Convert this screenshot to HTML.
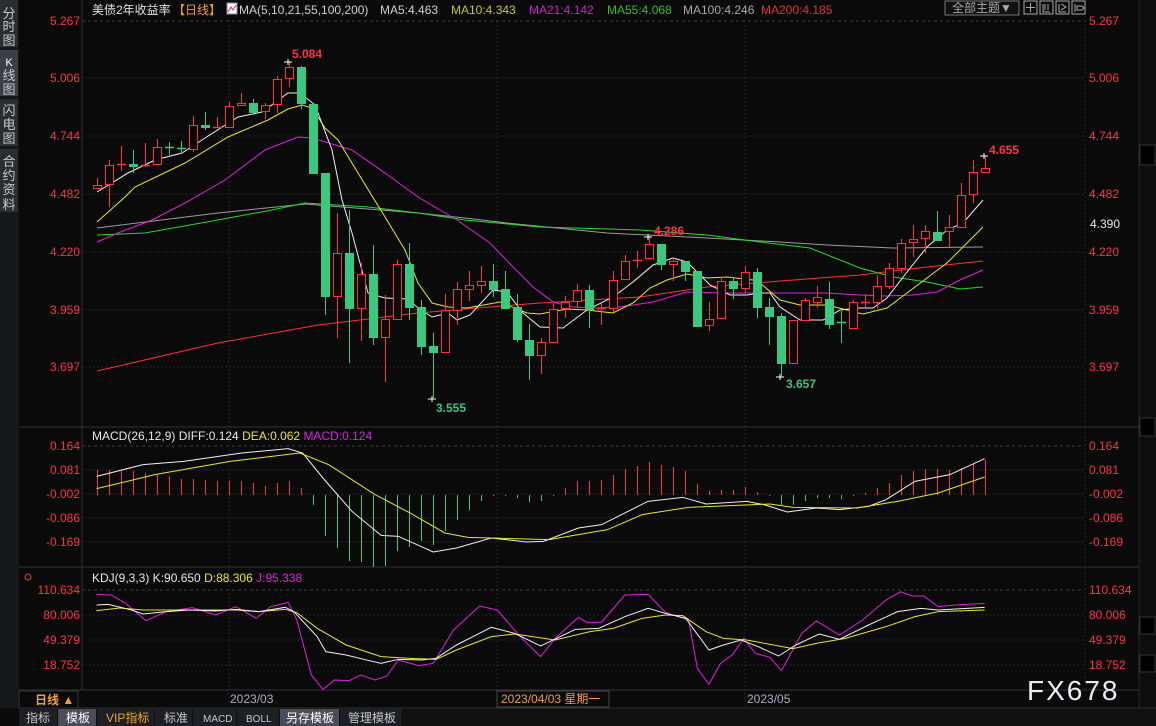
<!DOCTYPE html>
<html><head><meta charset="utf-8">
<style>
html,body{margin:0;padding:0;background:#0a0a0a;width:1156px;height:726px;overflow:hidden}
svg{display:block}
text{font-family:"Liberation Sans","Noto Sans CJK SC",sans-serif}
</style></head>
<body>
<svg id="s" width="1156" height="726" viewBox="0 0 1156 726" xmlns="http://www.w3.org/2000/svg">
<rect width="1156" height="726" fill="#0a0a0a"/>
<rect x="0" y="0" width="19" height="708" fill="#16171b"/>
<rect x="0" y="0" width="18" height="47" fill="#2b2d33"/>
<rect x="0" y="50" width="18" height="46" fill="#3c3f48"/>
<rect x="0" y="99" width="18" height="47" fill="#2b2d33"/>
<rect x="0" y="149" width="18" height="63" fill="#2b2d33"/>
<g fill="#c8c8c8" font-size="13" text-anchor="middle">
<text x="9" y="18">分</text><text x="9" y="31">时</text><text x="9" y="45">图</text>
<text x="9" y="66" font-size="11" fill="#fff">K</text><text x="9" y="80">线</text><text x="9" y="94">图</text>
<text x="9" y="115">闪</text><text x="9" y="129">电</text><text x="9" y="143">图</text>
<text x="9" y="166">合</text><text x="9" y="180">约</text><text x="9" y="194">资</text><text x="9" y="209">料</text>
</g>
<line x1="82" y1="0" x2="82" y2="690" stroke="#333" />
<line x1="1085" y1="0" x2="1085" y2="690" stroke="#333" stroke-dasharray="1,3"/>
<rect x="1139" y="0" width="17" height="708" fill="#0e0e0e"/>
<line x1="1139" y1="0" x2="1139" y2="708" stroke="#2a2a2a"/>
<rect x="1140" y="145" width="15" height="20" fill="#000" stroke="#333"/>
<rect x="1140" y="418" width="15" height="18" fill="#000" stroke="#333"/>
<rect x="1140" y="617" width="15" height="17" fill="#000" stroke="#333"/>
<rect x="1140" y="655" width="15" height="17" fill="#000" stroke="#333"/>
<line x1="19" y1="427" x2="1139" y2="427" stroke="#333"/>
<line x1="19" y1="567" x2="1139" y2="567" stroke="#333"/>
<line x1="19" y1="690" x2="1139" y2="690" stroke="#333"/>
<line x1="19" y1="708" x2="1156" y2="708" stroke="#333"/>
<g stroke="#3a3a3a" stroke-dasharray="1,3">
<line x1="82" y1="21" x2="1085" y2="21" stroke-dasharray="3,3"/>
<line x1="82" y1="78" x2="1085" y2="78"/><line x1="82" y1="136" x2="1085" y2="136"/>
<line x1="82" y1="194" x2="1085" y2="194"/><line x1="82" y1="252" x2="1085" y2="252"/>
<line x1="82" y1="310" x2="1085" y2="310"/><line x1="82" y1="367" x2="1085" y2="367"/>
<line x1="82" y1="446" x2="1085" y2="446" stroke-dasharray="3,3"/><line x1="82" y1="470" x2="1085" y2="470"/>
<line x1="82" y1="494" x2="1085" y2="494"/><line x1="82" y1="518" x2="1085" y2="518"/><line x1="82" y1="542" x2="1085" y2="542"/>
<line x1="82" y1="590" x2="1085" y2="590" stroke-dasharray="3,3"/><line x1="82" y1="615" x2="1085" y2="615"/>
<line x1="82" y1="640" x2="1085" y2="640"/><line x1="82" y1="665" x2="1085" y2="665"/>
<line x1="229" y1="21" x2="229" y2="708"/><line x1="497" y1="21" x2="497" y2="708"/><line x1="745" y1="21" x2="745" y2="708"/>
</g>
<text x="92" y="14" font-size="12" fill="#e0e0e0">美债2年收益率</text>
<text x="173" y="14" font-size="12" fill="#f0a030">【日线】</text>
<rect x="227" y="3" width="10" height="11" fill="#fff" stroke="#88a" />
<polyline points="228,12 231,7 233,10 236,5" fill="none" stroke="#d03050"/>
<g font-size="12">
<text x="239" y="14" fill="#d0d0d0">MA(5,10,21,55,100,200)</text>
<text x="380" y="14" fill="#d0d0d0">MA5:4.463</text>
<text x="451" y="14" fill="#c8c820">MA10:4.343</text>
<text x="529" y="14" fill="#d020d0">MA21:4.142</text>
<text x="607" y="14" fill="#30c030">MA55:4.068</text>
<text x="683" y="14" fill="#a8a8a8">MA100:4.246</text>
<text x="761" y="14" fill="#e03040">MA200:4.185</text>
</g>
<rect x="945" y="1" width="74" height="14" fill="#111" stroke="#777"/>
<text x="952" y="12" font-size="12" fill="#aaa">全部主题▼</text>
<g fill="none" stroke="#aaa">
<rect x="1024" y="1" width="13" height="13"/><rect x="1040" y="1" width="13" height="13"/>
<rect x="1056" y="1" width="13" height="13"/><rect x="1072" y="1" width="13" height="13"/>
<path d="M1030.5 3v9M1026 7.5h9M1043 4v8h7M1045 4v6M1048 4v6M1059 4v8h7M1061 4l5 3-5 3M1075 4v8M1077 6h5l2 2-2 2h-5z"/>
</g>
<g font-size="12" fill="#ff3344" text-anchor="end">
<text x="80" y="25">5.267</text><text x="80" y="82">5.006</text><text x="80" y="140">4.744</text>
<text x="80" y="198">4.482</text><text x="80" y="256">4.220</text><text x="80" y="314">3.959</text><text x="80" y="371">3.697</text>
<text x="80" y="450">0.164</text><text x="80" y="474">0.081</text><text x="80" y="498">-0.002</text><text x="80" y="522">-0.086</text><text x="80" y="546">-0.169</text>
<text x="80" y="594">110.634</text><text x="80" y="619">80.006</text><text x="80" y="644">49.379</text><text x="80" y="669">18.752</text>
</g>
<g font-size="12" fill="#ff3344">
<text x="1089" y="25">5.267</text><text x="1089" y="82">5.006</text><text x="1089" y="140">4.744</text>
<text x="1089" y="198">4.482</text><text x="1089" y="256">4.220</text><text x="1089" y="314">3.959</text><text x="1089" y="371">3.697</text>
<text x="1089" y="450">0.164</text><text x="1089" y="474">0.081</text><text x="1089" y="498">-0.002</text><text x="1089" y="522">-0.086</text><text x="1089" y="546">-0.169</text>
<text x="1089" y="594">110.634</text><text x="1089" y="619">80.006</text><text x="1089" y="644">49.379</text><text x="1089" y="669">18.752</text>
</g>
<rect x="1086" y="216" width="50" height="15" fill="#0a0a0a"/>
<text x="1090" y="228" font-size="12" fill="#e8e8e8">4.390</text>
<g fill="none" stroke-width="1">
<polyline stroke="#ff3030" points="97,371 218,343 318,325 418,313 465,309 540,303 640,297 707,287 780,281 860,275 927,267 983,261"/>
<polyline stroke="#9a9a9a" points="97,228 218,213 305,204 418,213 465,218 507,223 607,233 707,238 780,242 827,245 893,248 983,247"/>
<polyline stroke="#22dd22" points="97,235 145,233 218,220 272,210 305,203 368,207 418,213 465,220 540,227 640,230 707,235 760,242 810,248 860,268 893,277 927,282 960,289 983,287"/>
<polyline stroke="#e020e0" points="97,242 118,233 152,220 185,203 225,180 265,150 298,137 312,138 352,150 385,173 418,197 457,220 490,243 513,267 533,287 553,302 573,307 597,308 620,307 653,302 687,292 720,293 760,293 827,293 860,295 887,296 913,295 937,292 960,280 983,270"/>
<polyline stroke="#e8e820" points="97,222 125,197 135,187 185,163 228,137 268,120 288,109 302,105 312,108 325,128 338,140 358,173 385,217 405,250 418,283 432,303 448,307 467,308 500,302 527,313 540,314 567,309 587,310 613,313 633,303 650,288 667,280 687,274 707,278 727,277 753,280 760,283 780,300 800,305 827,305 847,310 863,314 887,308 907,293 927,278 947,263 963,247 983,227"/>
<polyline stroke="#f0f0f0" points="97,192 128,173 155,160 182,153 205,138 238,117 262,112 288,93 300,93 315,105 332,150 342,200 352,233 368,293 385,298 408,299 418,308 432,317 448,313 457,320 470,315 493,290 507,292 523,313 540,327 563,328 587,310 613,297 633,282 653,265 673,258 687,262 697,272 710,285 730,295 747,295 760,293 770,293 780,307 800,320 823,320 840,310 857,308 873,308 887,298 907,272 927,247 947,230 963,223 983,200"/>
</g>
<g id="candles"></g>
<g id="hist" shape-rendering="crispEdges"></g>
<g stroke="#fff"><path d="M284 62h8M288 59v6M428 399h8M432 396v6M776 377h8M780 374v6M644 237h8M648 234v6M980 156h8M984 153v6"/></g>
<g font-size="12" font-weight="bold">
<text x="292" y="58" fill="#ff3344">5.084</text>
<text x="436" y="412" fill="#40c080">3.555</text>
<text x="786" y="388" fill="#40c080">3.657</text>
<text x="654" y="235" fill="#ff3344">4.286</text>
<text x="989" y="154" fill="#ff3344">4.655</text>
</g>
<text x="92" y="440" font-size="12"><tspan fill="#e8e8e8">MACD(26,12,9) DIFF:0.124 </tspan><tspan fill="#e8e820">DEA:0.062 </tspan><tspan fill="#e020e0">MACD:0.124</tspan></text>
<g transform="translate(85,428) scale(0.5804,0.3333)" fill="none">
<polyline vector-effect="non-scaling-stroke" stroke="#f0f0f0" points="20,145 100,110 170,100 270,75 350,62 375,75 410,150 460,250 510,322 540,325 600,372 640,360 700,330 760,342 790,340 850,300 890,290 970,220 1030,208 1070,228 1140,220 1170,230 1210,252 1260,240 1300,245 1350,235 1380,215 1430,160 1490,140 1550,92"/>
<polyline vector-effect="non-scaling-stroke" stroke="#e8e820" points="20,182 120,140 250,100 370,75 420,110 500,200 560,255 620,315 660,328 800,335 900,305 960,260 1040,238 1180,228 1220,238 1330,240 1400,220 1470,195 1550,147"/>
</g>
<text x="92" y="582" font-size="12"><tspan fill="#e8e8e8">KDJ(9,3,3) K:90.650 </tspan><tspan fill="#e8e820">D:88.306 </tspan><tspan fill="#e020e0">J:95.338</tspan></text>
<circle cx="28" cy="577" r="3" fill="none" stroke="#e04040"/>
<g transform="translate(85,570) scale(0.5804,0.3333)" fill="none">
<polyline vector-effect="non-scaling-stroke" stroke="#e020e0" points="20,73 45,75 70,100 105,152 140,125 185,113 225,135 260,110 295,145 320,110 350,97 365,150 390,315 410,358 430,330 455,332 475,315 500,330 520,318 540,270 575,287 600,280 635,180 680,108 710,120 750,200 785,260 810,205 850,142 865,157 890,157 930,75 970,73 1000,127 1040,150 1055,295 1075,343 1095,280 1115,255 1135,205 1155,250 1180,262 1200,302 1235,190 1260,153 1300,195 1340,150 1380,90 1405,65 1425,78 1445,78 1470,110 1500,105 1550,100"/>
<polyline vector-effect="non-scaling-stroke" stroke="#e8e820" points="20,122 60,114 100,120 200,120 260,120 300,125 345,118 365,128 400,175 450,225 510,260 560,265 605,268 640,240 700,200 740,192 810,210 870,185 910,175 960,145 1000,135 1030,137 1070,185 1100,205 1140,210 1220,236 1260,220 1310,205 1380,170 1430,140 1470,125 1550,120"/>
<polyline vector-effect="non-scaling-stroke" stroke="#f0f0f0" points="20,105 40,103 80,120 100,132 140,125 180,120 225,123 260,118 300,125 345,112 360,125 400,200 415,245 450,255 480,268 510,280 540,268 580,270 605,265 640,225 700,172 740,190 785,228 845,178 885,175 930,140 970,115 1000,130 1035,145 1075,240 1100,225 1130,210 1160,230 1195,258 1225,225 1265,192 1300,208 1350,165 1400,125 1440,115 1470,120 1550,112"/>
</g>
<rect x="19" y="691" width="59" height="17" fill="#0a0a0a" stroke="#333"/>
<text x="35" y="704" font-size="12" fill="#f0a030" font-weight="bold">日线 ▲</text>
<text x="230" y="703" font-size="12" fill="#a8b0c0">2023/03</text>
<rect x="497" y="691" width="112" height="16" fill="#0a0a0a" stroke="#444"/>
<text x="501" y="703" font-size="12" fill="#f0a030">2023/04/03 星期一</text>
<text x="747" y="703" font-size="12" fill="#a8b0c0">2023/05</text>
<text x="1027" y="700" font-size="28" fill="#e8eef4" letter-spacing="2">FX678</text>
<rect x="19" y="709" width="1137" height="17" fill="#111"/>
<rect x="19" y="709" width="38" height="17" fill="#1e1f24"/>
<rect x="58" y="709" width="38" height="17" fill="#4a4d58"/>
<rect x="97" y="709" width="57" height="17" fill="#1e1f24"/>
<rect x="155" y="709" width="37" height="17" fill="#1e1f24"/>
<rect x="193" y="709" width="43" height="17" fill="#1e1f24"/>
<rect x="237" y="709" width="42" height="17" fill="#1e1f24"/>
<rect x="280" y="709" width="59" height="17" fill="#4a4d58"/>
<rect x="340" y="709" width="61" height="17" fill="#1e1f24"/>
<g font-size="12" fill="#c8c8c8">
<text x="26" y="722">指标</text><text x="66" y="722" fill="#fff">模板</text>
<text x="106" y="722" fill="#f0a030">VIP指标</text><text x="164" y="722">标准</text>
<text x="203" y="722" font-size="10">MACD</text><text x="246" y="722" font-size="10">BOLL</text>
<text x="286" y="722" fill="#fff">另存模板</text><text x="348" y="722">管理模板</text>
</g>
</svg>
<script>
var C=[[185,188,178,188,1],[165,184,160,207,1],[164,164,146,171,1],[164,166,150,173,0],[165,165,143,167,1],[147,164,139,164,1],[147,147,142,155,0],[148,148,141,152,0],[125,149,116,152,1],[125,127,112,130,0],[127,127,117,127,1],[106,127,102,127,1],[103,105,93,105,1],[103,112,99,115,0],[105,111,103,119,1],[79,104,76,113,1],[67,78,62,87,1],[67,103,66,109,0],[104,173,104,174,0],[173,296,173,315,0],[253,296,213,338,1],[253,308,210,363,0],[274,308,263,341,1],[274,337,245,345,0],[319,337,295,382,1],[264,319,260,320,1],[264,307,243,320,0],[307,346,300,355,0],[346,352,333,398,0],[310,352,294,352,1],[289,310,282,325,1],[285,289,271,301,1],[281,285,266,293,1],[281,289,264,297,0],[289,308,271,308,0],[307,339,294,342,0],[340,355,324,380,0],[342,355,338,374,1],[309,342,303,342,1],[302,308,296,318,1],[290,301,284,308,1],[290,309,285,328,0],[308,308,303,325,1],[280,308,271,312,1],[261,279,255,279,1],[260,260,251,268,1],[244,258,236,258,1],[244,264,244,270,0],[261,264,257,281,1],[261,271,261,281,0],[271,326,271,326,0],[319,325,302,331,1],[281,318,277,318,1],[281,288,278,299,0],[272,288,266,293,1],[272,307,268,318,0],[307,316,298,345,0],[316,363,313,377,0],[320,363,320,363,1],[300,320,298,320,1],[297,302,286,308,1],[299,324,282,329,0],[322,322,311,343,0],[302,328,300,329,1],[302,302,294,308,1],[286,302,275,309,1],[268,286,263,289,1],[243,268,239,273,1],[239,242,225,257,1],[231,238,225,253,1],[232,240,211,241,0],[227,231,215,247,1],[195,227,183,227,1],[172,194,160,203,1],[168,172,156,173,1]];
var H=[125,125,125,130,135,140,145,152,153,155,158,158,160,165,173,165,160,180,232,325,360,400,402,418,415,370,358,340,352,310,275,245,218,205,204,210,222,220,200,180,158,158,155,140,122,115,102,110,118,128,168,190,186,185,178,192,205,232,230,218,210,210,212,205,195,180,165,142,130,122,122,125,120,108,95];
var R="#ff3040",G="#38c880",s="",h="";
C.forEach(function(c,i){var x=97+12*i,col=c[4]?R:G;
s+='<line x1="'+(x+.5)+'" y1="'+c[2]+'" x2="'+(x+.5)+'" y2="'+c[3]+'" stroke="'+col+'"/>';
var t=c[0],b=c[1];if(b-t<1){s+='<line x1="'+(x-4)+'" y1="'+(t+.5)+'" x2="'+(x+5)+'" y2="'+(t+.5)+'" stroke="'+col+'" stroke-width="1.5"/>';}
else if(c[4]){s+='<rect x="'+(x-3.5)+'" y="'+(t+.5)+'" width="8" height="'+(b-t)+'" fill="#0a0a0a" stroke="'+col+'"/>';}
else{s+='<rect x="'+(x-4)+'" y="'+t+'" width="9" height="'+(b-t+1)+'" fill="'+col+'"/>';}});
H.forEach(function(v,i){var x=97+12*i,y=Math.round(428+v/3),z=495;var top=Math.min(y,z),hh=Math.abs(z-y)||1;h+='<rect x="'+x+'" y="'+top+'" width="1" height="'+hh+'" fill="'+(y<z?R:G)+'"/>';});
document.getElementById("candles").innerHTML=s;document.getElementById("hist").innerHTML=h;
</script>
</body></html>
